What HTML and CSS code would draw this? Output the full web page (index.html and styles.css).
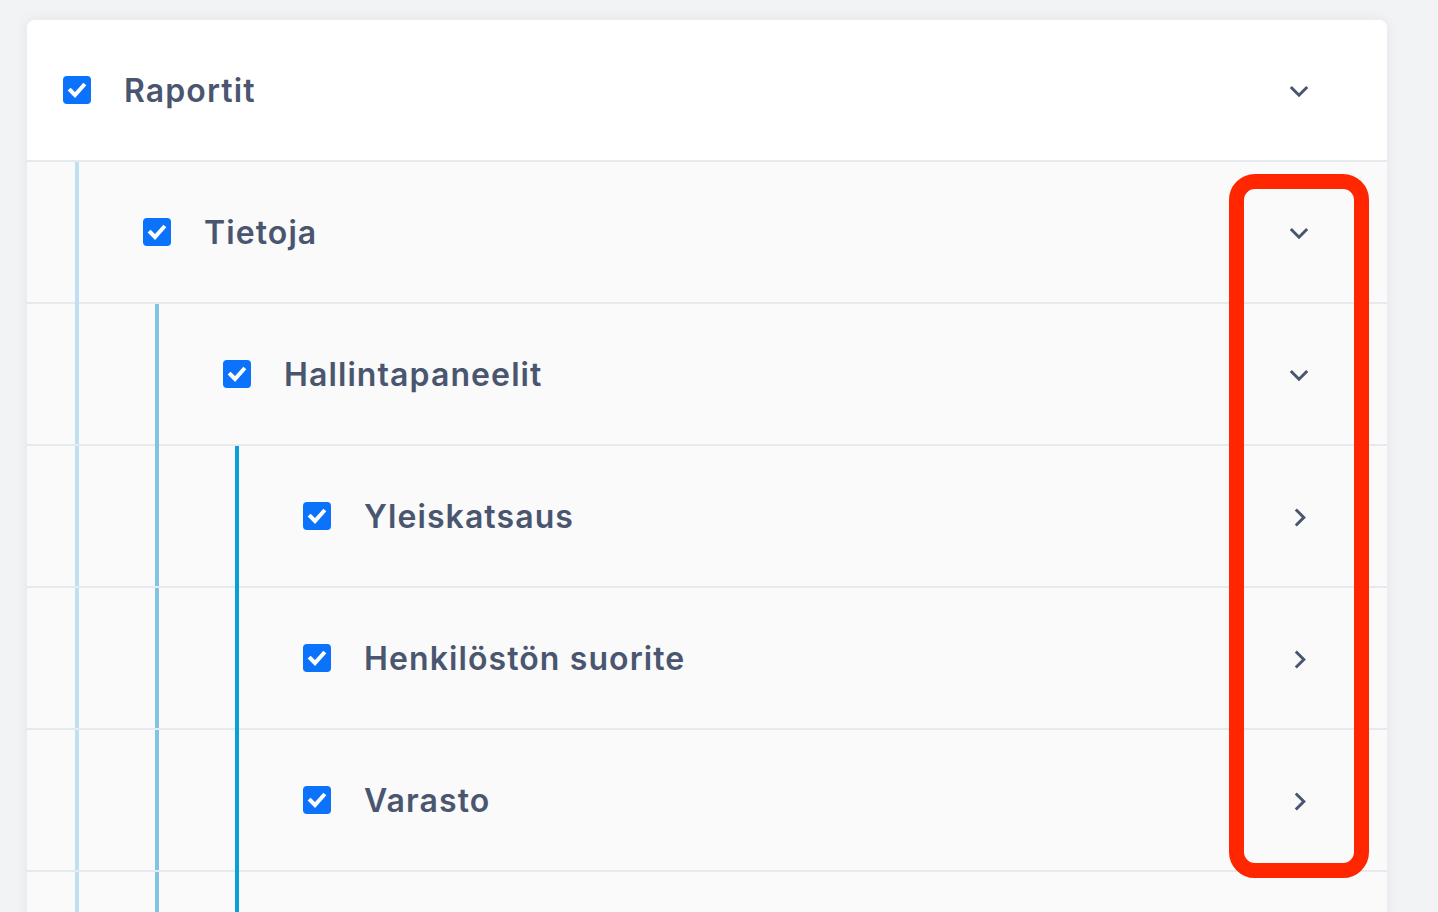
FILE: index.html
```html
<!DOCTYPE html>
<html lang="fi">
<head>
<meta charset="utf-8">
<title>Raportit</title>
<link rel="stylesheet" href="styles.css">
</head>
<body>
<div class="page">
  <div class="card">
    <div class="row row-top">
      <span class="cb"><svg viewBox="0 0 28 28" width="28" height="28"><path d="M7.5 14.5 L12 19 L20.5 9.5" fill="none" stroke="#fff" stroke-width="4" stroke-linecap="square"/></svg></span>
      <span class="label">Raportit</span>
      <span class="chev"><svg viewBox="0 0 24 24" width="24" height="24"><path d="M3.8 9 L12 17.2 L20.2 9" fill="none" stroke="#4a5670" stroke-width="3"/></svg></span>
    </div>
    <div class="row">
      <span class="guide g1 last"></span>
      <span class="cb"><svg viewBox="0 0 28 28" width="28" height="28"><path d="M7.5 14.5 L12 19 L20.5 9.5" fill="none" stroke="#fff" stroke-width="4" stroke-linecap="square"/></svg></span>
      <span class="label">Tietoja</span>
      <span class="chev"><svg viewBox="0 0 24 24" width="24" height="24"><path d="M3.8 9 L12 17.2 L20.2 9" fill="none" stroke="#4a5670" stroke-width="3"/></svg></span>
    </div>
    <div class="row">
      <span class="guide g1"></span>
      <span class="guide g2 last"></span>
      <span class="cb"><svg viewBox="0 0 28 28" width="28" height="28"><path d="M7.5 14.5 L12 19 L20.5 9.5" fill="none" stroke="#fff" stroke-width="4" stroke-linecap="square"/></svg></span>
      <span class="label">Hallintapaneelit</span>
      <span class="chev"><svg viewBox="0 0 24 24" width="24" height="24"><path d="M3.8 9 L12 17.2 L20.2 9" fill="none" stroke="#4a5670" stroke-width="3"/></svg></span>
    </div>
    <div class="row">
      <span class="guide g1"></span>
      <span class="guide g2"></span>
      <span class="guide g3 last"></span>
      <span class="cb"><svg viewBox="0 0 28 28" width="28" height="28"><path d="M7.5 14.5 L12 19 L20.5 9.5" fill="none" stroke="#fff" stroke-width="4" stroke-linecap="square"/></svg></span>
      <span class="label">Yleiskatsaus</span>
      <span class="chev"><svg viewBox="0 0 24 24" width="24" height="24"><path d="M8.8 5.5 L16.8 13.5 L8.8 21.5" fill="none" stroke="#4a5670" stroke-width="3"/></svg></span>
    </div>
    <div class="row">
      <span class="guide g1"></span>
      <span class="guide g2"></span>
      <span class="guide g3 last"></span>
      <span class="cb"><svg viewBox="0 0 28 28" width="28" height="28"><path d="M7.5 14.5 L12 19 L20.5 9.5" fill="none" stroke="#fff" stroke-width="4" stroke-linecap="square"/></svg></span>
      <span class="label">Henkilöstön suorite</span>
      <span class="chev"><svg viewBox="0 0 24 24" width="24" height="24"><path d="M8.8 5.5 L16.8 13.5 L8.8 21.5" fill="none" stroke="#4a5670" stroke-width="3"/></svg></span>
    </div>
    <div class="row">
      <span class="guide g1"></span>
      <span class="guide g2"></span>
      <span class="guide g3 last"></span>
      <span class="cb"><svg viewBox="0 0 28 28" width="28" height="28"><path d="M7.5 14.5 L12 19 L20.5 9.5" fill="none" stroke="#fff" stroke-width="4" stroke-linecap="square"/></svg></span>
      <span class="label">Varasto</span>
      <span class="chev"><svg viewBox="0 0 24 24" width="24" height="24"><path d="M8.8 5.5 L16.8 13.5 L8.8 21.5" fill="none" stroke="#4a5670" stroke-width="3"/></svg></span>
    </div>
    <div class="row">
      <span class="guide g1"></span>
      <span class="guide g2"></span>
      <span class="guide g3 last"></span>
    </div>
  </div>
  <div class="highlight"></div>
</div>
</body>
</html>
```
FILE: styles.css
```css
html, body {
  margin: 0;
  padding: 0;
  height: 100%;
  overflow: hidden;
  background: #f2f3f5;
}
.page {
  position: relative;
  height: 912px;
  padding: 20px 0 0 27px;
  box-sizing: border-box;
  font-family: Inter, "Noto Sans", "Liberation Sans", sans-serif;
}
.card {
  width: 1360px;
  height: 1000px;
  background: #fafafa;
  border-radius: 8px 8px 0 0;
  overflow: hidden;
  box-shadow: 0 0 14px rgba(30, 40, 60, 0.07);
}
.row {
  display: flex;
  align-items: center;
  height: 140px;
  border-bottom: 2px solid #e6e9ee;
  padding-left: 36px;
  padding-right: 76px;
  background: #fafafa;
}
.row-top {
  background: #ffffff;
}
.guide {
  align-self: stretch;
  flex: 0 0 80px;
  margin-left: -36px;
  margin-right: 36px;
}
.guide + .guide {
  margin-left: -36px;
}
.guide.last {
  margin-bottom: -2px;
}
.g1 {
  background: linear-gradient(to right, transparent 48px, #bfe0f2 48px, #bfe0f2 52px, transparent 52px);
}
.g2 {
  background: linear-gradient(to right, transparent 48px, #80c4e5 48px, #80c4e5 52px, transparent 52px);
}
.g3 {
  background: linear-gradient(to right, transparent 48px, #0a9fd6 48px, #0a9fd6 52px, transparent 52px);
}
.cb {
  flex: 0 0 28px;
  width: 28px;
  height: 28px;
  border-radius: 4px;
  background: #0b72fb;
  display: flex;
}
.label {
  margin-left: 33px;
  flex: 1;
  font-size: 32px;
  font-weight: 600;
  color: #4a5670;
  letter-spacing: 1.1px;
  white-space: nowrap;
}
.chev {
  display: flex;
  width: 24px;
  height: 24px;
}
.highlight {
  position: absolute;
  left: 1229px;
  top: 174px;
  width: 140px;
  height: 704px;
  box-sizing: border-box;
  border: 15px solid #ff2600;
  border-radius: 26px;
}
```
